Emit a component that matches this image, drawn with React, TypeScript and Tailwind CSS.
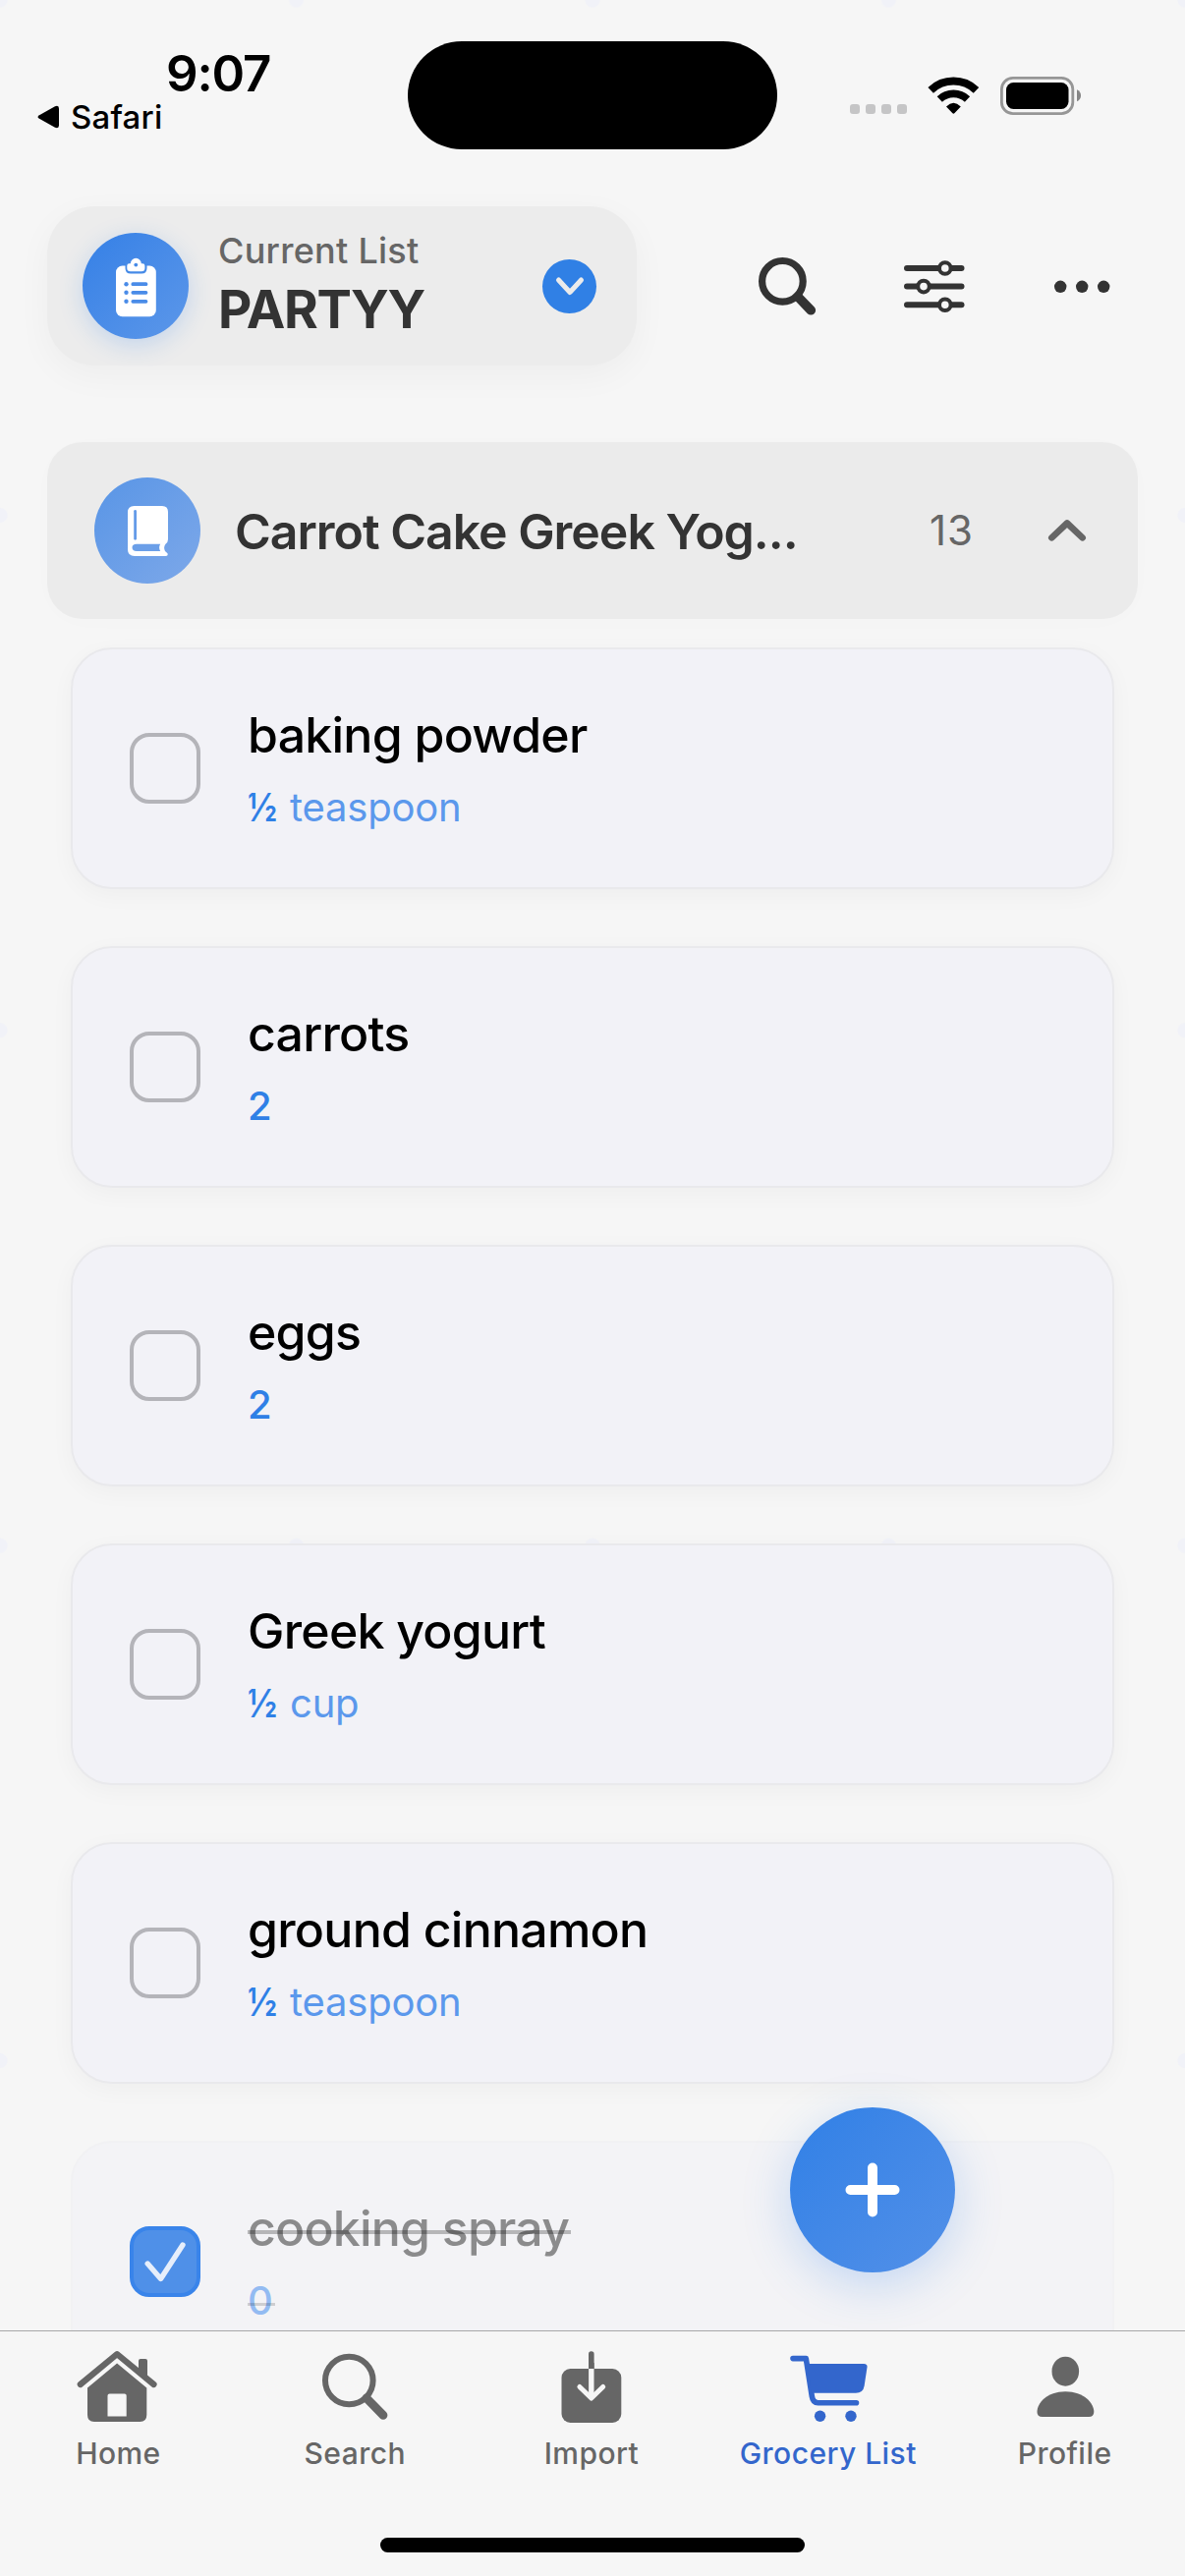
import React from "react";

type Item = { name: string; amount: string; unit?: string };

const ITEMS: Item[] = [
  { name: "baking powder", amount: "½", unit: "teaspoon" },
  { name: "carrots", amount: "2" },
  { name: "eggs", amount: "2" },
  { name: "Greek yogurt", amount: "½", unit: "cup" },
  { name: "ground cinnamon", amount: "½", unit: "teaspoon" },
];

function StatusBar() {
  return (
    <div className="flex h-[210px] shrink-0 items-start">
      <div className="w-[415px] pt-[53px]">
        <div className="pl-[169px] text-[51px] leading-[44px] font-semibold tracking-[-1.2px] text-black">9:07</div>
        <div className="flex items-center pl-[38px]">
          <svg width="22" height="24" viewBox="0 0 22 24" className="mr-[12px]">
            <path d="M2 10.2 L18 1.3 Q22 -0.2 22 3.5 V20.5 Q22 24.2 18 22.7 L2 13.8 Q-1 12 2 10.2Z" fill="#000" />
          </svg>
          <span className="text-[33px] leading-[44px] font-medium tracking-[0.2px] text-black">Safari</span>
        </div>
      </div>
      <div className="mt-[42px] h-[110px] w-[376px] rounded-full bg-black" />
      <div className="flex pt-[70px] pl-[74px]">
        <svg width="240" height="54" viewBox="865 70 240 54" fill="none">
          {[865, 881, 897, 913].map((x) => (
            <rect key={x} x={x} y="106" width="10" height="10" rx="3" fill="#c5c5c6" />
          ))}
          <path d="M947.2 91.8 A33.5 33.5 0 0 1 993.5 91.8" stroke="#000" strokeWidth="8" />
          <path d="M956.3 101 A20.5 20.5 0 0 1 984.5 101" stroke="#000" strokeWidth="7.6" />
          <path d="M963 108.4 Q970.4 101.2 977.8 108.4 L971.6 115 Q970.4 116.3 969.2 115Z" fill="#000" />
          <rect x="1019.4" y="79.3" width="72.4" height="36.4" rx="11.5" stroke="#969696" strokeWidth="2.8" />
          <rect x="1024" y="84" width="63.5" height="27" rx="7.5" fill="#000" />
          <path d="M1096 91.2 Q1100 93 1100 97.2 Q1100 101.4 1096 103.2Z" fill="#868686" />
        </svg>
      </div>
    </div>
  );
}

function ListHeader() {
  return (
    <header className="flex h-[162px] shrink-0 items-center pl-[48px]">
      <div className="flex h-[162px] w-[600px] items-center rounded-[48px] bg-[#ececec] pr-[41px] pl-[36px] shadow-[0_10px_36px_rgba(0,0,0,0.04)]">
        <div className="flex size-[108px] items-center justify-center rounded-full bg-linear-to-br from-[#3480e6] to-[#5c97e9] shadow-[0_6px_24px_rgba(47,128,237,0.22)]">
          <svg width="60" height="70" viewBox="108 256 60 70">
            <rect x="118" y="270.5" width="40.8" height="51.7" rx="6.5" fill="#fff" />
            <path d="M127.5 266 H149.5 V273 Q149.5 278.5 144 278.5 H133 Q127.5 278.5 127.5 273Z" fill="#458ae7" />
            <path d="M129.3 270.5 Q129.3 268.3 131.5 268.3 H132.8 A5.5 5.5 0 0 1 143.8 268.3 H145 Q147.4 268.3 147.4 270.5 V273 Q147.4 276.3 144 276.3 H132.8 Q129.3 276.3 129.3 273Z" fill="#fff" />
            <circle cx="138.3" cy="269.6" r="1.9" fill="#458ae7" />
            {[289.2, 297.8, 306.8].map((y) => (
              <g key={y} fill="#4a8ce8">
                <circle cx="128.5" cy={y} r="2.2" />
                <rect x="133.5" y={y - 1.9} width="16.8" height="3.8" rx="1.6" />
              </g>
            ))}
          </svg>
        </div>
        <div className="ml-[30px] flex-1 pb-[4px]">
          <div className="text-[36px] leading-[44px] font-medium tracking-[0.26px] text-[#666]">Current List</div>
          <div className="mt-[8px] text-[53px] leading-[60px] font-bold tracking-[-1.3px] text-[#333]">PARTYY</div>
        </div>
        <div className="flex size-[55px] items-center justify-center rounded-full bg-[#3080e5]">
          <svg width="34" height="26" viewBox="0 0 34 26" fill="none">
            <path d="M5.5 7 L17 19.5 L28.5 7" stroke="#ebebeb" strokeWidth="5" strokeLinecap="round" strokeLinejoin="round" />
          </svg>
        </div>
      </div>
      <svg width="60" height="60" viewBox="772 261 60 60" fill="none" className="ml-[124px]">
        <circle cx="796.4" cy="286.3" r="20.8" stroke="#333" strokeWidth="7.2" />
        <path d="M812 302 L825.3 315.8" stroke="#333" strokeWidth="9.6" strokeLinecap="round" />
      </svg>
      <svg width="62" height="60" viewBox="920 261 62 60" fill="none" className="ml-[88px]">
        {[
          [273, 961.8],
          [291.6, 940],
          [310.2, 961.8],
        ].map(([y, x]) => (
          <g key={y} stroke="#333">
            <path d={`M923 ${y} H978.5`} strokeWidth="6" strokeLinecap="round" />
            <circle cx={x} cy={y} r="5.8" strokeWidth="4" fill="#f6f6f6" />
          </g>
        ))}
      </svg>
      <svg width="60" height="60" viewBox="1071 261 60 60" fill="#333" className="ml-[89px]">
        <circle cx="1079.2" cy="291.8" r="6.2" />
        <circle cx="1101.2" cy="291.8" r="6.2" />
        <circle cx="1123.2" cy="291.8" r="6.2" />
      </svg>
    </header>
  );
}

function SectionHeader() {
  return (
    <div className="mx-[48px] mt-[78px] flex h-[180px] shrink-0 items-center rounded-[36px] bg-[#ebebeb] pr-[51px] pl-[48px] shadow-[0_3px_30px_rgba(0,0,0,0.012)]">
      <div className="flex size-[108px] items-center justify-center rounded-full bg-linear-to-br from-[#5895e6] to-[#7da8e9]">
        <svg width="60" height="60" viewBox="120 510 60 60">
          <path d="M136.5 515 H165 Q171 515 171 521 V549 Q171 552 168.5 553.8 Q166 557 168 561 L170.5 563.3 Q171.4 566 168.5 566 H137 Q130 566 130 559.5 V521.5 Q130 515 136.5 515Z" fill="#fff" />
          <path d="M137.6 520.3 V548.3" stroke="#649be8" strokeWidth="2.8" strokeLinecap="round" />
          <path d="M139 553.7 H163.2 Q161 557.3 163.2 561 H139 Q134.5 561 134.5 557.3 Q134.5 553.7 139 553.7Z" fill="#6b9fe8" />
        </svg>
      </div>
      <h2 className="ml-[35px] flex-1 pt-px text-[50px] leading-[60px] font-semibold tracking-[-1.02px] text-[#333]">
        Carrot Cake Greek Yog...
      </h2>
      <span className="mr-[74px] text-[42px] leading-[50px] tracking-[1px] text-[#666]">13</span>
      <svg width="42" height="26" viewBox="1065 528 42 26" fill="none">
        <path d="M1070.3 548.3 L1086 533.5 L1101.7 548.3" stroke="#666" strokeWidth="6.6" strokeLinecap="round" strokeLinejoin="round" />
      </svg>
    </div>
  );
}

function ItemCard({ item }: { item: Item }) {
  return (
    <li className="flex h-[246px] shrink-0 items-center rounded-[42px] border-2 border-[#e9e9ec] bg-[#f2f2f7] pl-[58px] shadow-[0_6px_24px_rgba(0,0,0,0.035)]">
      <div className="size-[72px] rounded-[20px] border-4 border-[#b4b4b9]" />
      <div className="mt-[6px] ml-[48px]">
        <div className="text-[50px] leading-[72px] font-medium tracking-[-0.75px] text-black">{item.name}</div>
        <div className="flex text-[40px] leading-[75px]">
          {item.unit ? (
            <>
              <span className="w-[43px] origin-left scale-x-[0.86] font-semibold text-[#2f80e6]">{item.amount}</span>
              <span className="tracking-[-0.2px] text-[#5b98ec]">{item.unit}</span>
            </>
          ) : (
            <span className="font-medium text-[#2f80e6]">{item.amount}</span>
          )}
        </div>
      </div>
    </li>
  );
}

function CheckedCard() {
  return (
    <li className="flex h-[246px] shrink-0 items-center rounded-[42px] border-2 border-[#f1f1f3] bg-[#f3f3f6] pl-[58px]">
      <div className="flex size-[72px] items-center justify-center rounded-[20px] border-4 border-[#3984ea] bg-[#4f90e8]">
        <svg width="56" height="56" viewBox="140 2274 56 56" fill="none">
          <path d="M150.2 2304 L163.6 2319.5 L186 2285" stroke="#e6eefb" strokeWidth="5.4" strokeLinecap="round" strokeLinejoin="round" />
        </svg>
      </div>
      <div className="mt-[6px] ml-[48px]">
        <div className="relative text-[50px] leading-[72px] font-medium tracking-[-0.8px] text-[#8b8b8c]">
          cooking spray
          <span className="absolute top-[38px] left-0 h-[4px] w-[329px] bg-black/25" />
        </div>
        <div className="relative text-[40px] leading-[75px] font-medium text-[#93bbf2]">
          0
          <span className="absolute top-[40px] left-0 h-[3px] w-[28px] bg-black/15" />
        </div>
      </div>
    </li>
  );
}

const TABS = [
  {
    label: "Home",
    box: "74.5 2385 90 90",
    art: (
      <>
        <path d="M81.3 2427 L118.6 2396.2 L156 2427" fill="none" stroke="currentColor" strokeWidth="6.2" strokeLinecap="round" strokeLinejoin="round" />
        <path d="M140.5 2416 V2403 Q140.5 2401 142.5 2401 H147.5 Q149.5 2401 149.5 2403 V2422Z" />
        <path fillRule="evenodd" d="M118.6 2405.5 L148.8 2430.5 V2458 Q148.8 2465 142 2465 H95.3 Q88.5 2465 88.5 2458 V2430.5Z M111 2436.5 Q109 2436.5 109 2438.5 V2459.5 H128.2 V2438.5 Q128.2 2436.5 126.2 2436.5Z" />
      </>
    ),
  },
  {
    label: "Search",
    box: "316 2385 90 90",
    art: (
      <g fill="none" stroke="currentColor">
        <circle cx="355.3" cy="2423" r="24.3" strokeWidth="6" />
        <path d="M373 2441 L390 2458.3" strokeWidth="8.8" strokeLinecap="round" />
      </g>
    ),
  },
  {
    label: "Import",
    box: "557.5 2385 90 90",
    art: (
      <>
        <rect x="572" y="2411" width="60.8" height="55" rx="9" />
        <path d="M602.3 2396 V2411" fill="none" stroke="currentColor" strokeWidth="5.6" strokeLinecap="round" />
        <path d="M599.5 2405 H605.1 V2411 H599.5Z" />
        <path d="M602.3 2411 V2441" fill="none" stroke="#f6f6f6" strokeWidth="5.4" />
        <path d="M590.4 2429.5 L602.3 2441 L614.2 2429.5" fill="none" stroke="#f6f6f6" strokeWidth="5" strokeLinecap="round" strokeLinejoin="round" />
      </>
    ),
  },
  {
    label: "Grocery List",
    box: "798 2385 90 90",
    active: true,
    art: (
      <>
        <path d="M807 2400.6 H820.3 L826.3 2439 Q827.3 2445.7 832.5 2445.7 H871.5" fill="none" stroke="currentColor" strokeWidth="5.6" strokeLinecap="round" strokeLinejoin="round" />
        <path d="M821.5 2406 H879 Q883 2406 882.5 2409.5 L879.6 2428.5 Q878.5 2435.7 871 2435.7 H826Z" />
        <circle cx="834.6" cy="2459.3" r="5.7" />
        <circle cx="866" cy="2459.3" r="5.7" />
      </>
    ),
  },
  {
    label: "Profile",
    box: "1039.5 2385 90 90",
    art: (
      <>
        <ellipse cx="1084.8" cy="2413.7" rx="13.8" ry="15" />
        <path d="M1056 2455 C1056 2446 1066 2434.3 1084.8 2434.3 C1103.6 2434.3 1113.8 2446 1113.8 2455 Q1113.8 2460 1108.5 2460 H1061.3 Q1056 2460 1056 2455Z" />
      </>
    ),
  },
];

function TabBar() {
  return (
    <nav className="flex h-[250px] shrink-0 flex-col items-center border-t border-[#a8a8a9] bg-[#f6f6f6]">
      <div className="grid w-full grid-cols-5 pt-[12px] pr-[2px]">
        {TABS.map((t) => (
          <div key={t.label} className={t.active ? "flex flex-col items-center text-[#3366cc]" : "flex flex-col items-center text-[#666]"}>
            <svg width="90" height="90" viewBox={t.box} fill="currentColor">
              {t.art}
            </svg>
            <span className="text-[30px] leading-[44px] font-medium tracking-[0.45px] whitespace-nowrap">{t.label}</span>
          </div>
        ))}
      </div>
      <div className="mt-[64px] h-[15px] w-[432px] rounded-full bg-black" />
    </nav>
  );
}

export default function App() {
  return (
    <div className="flex h-[2622px] w-[1206px] flex-col overflow-hidden bg-[#f6f6f6] font-['Inter',sans-serif]">
      <main className="relative flex min-h-0 flex-1 flex-col overflow-hidden bg-[radial-gradient(circle,#f1f2f8_7px,transparent_8px)] bg-size-[301.5px_524.4px] bg-position-[150.75px_262.2px]">
        <StatusBar />
        <ListHeader />
        <SectionHeader />
        <ul className="flex flex-col gap-[58px] px-[72px] pt-[29px]">
          {ITEMS.map((item) => (
            <ItemCard key={item.name} item={item} />
          ))}
          <CheckedCard />
        </ul>
        <button className="absolute top-[2145px] left-[804px] flex size-[168px] items-center justify-center rounded-full bg-linear-to-br from-[#3080e6] to-[#5290e8] shadow-[0_12px_48px_rgba(47,128,237,0.25)]">
          <svg width="60" height="60" viewBox="0 0 60 60" fill="none" stroke="#fff" strokeWidth="10" strokeLinecap="round">
            <path d="M30 7.5 V52.5 M7.5 30 H52.5" />
          </svg>
        </button>
      </main>
      <TabBar />
    </div>
  );
}
